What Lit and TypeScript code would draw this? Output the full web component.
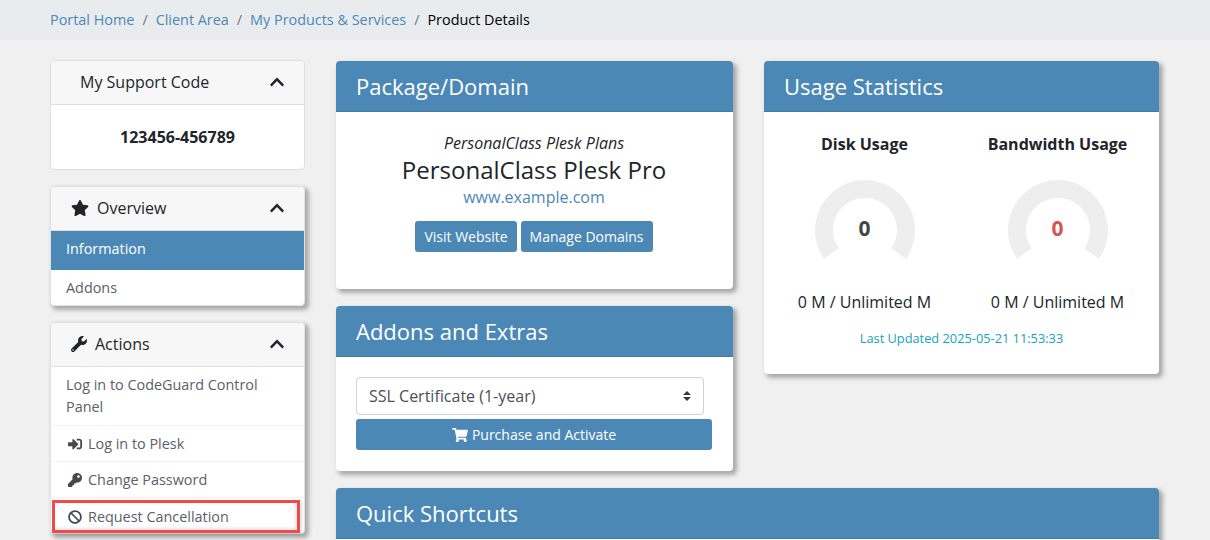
import { LitElement, html, css, svg } from "lit";
import { customElement } from "lit/decorators.js";

const I = {
  star: ["0 0 576 512", "M259.3 17.8L194 150.2 47.9 171.5c-26.2 3.8-36.7 36.1-17.7 54.6l105.7 103-25 145.5c-4.5 26.3 23.2 46 46.4 33.7L288 439.6l130.7 68.7c23.2 12.2 50.9-7.4 46.4-33.7l-25-145.5 105.7-103c19-18.5 8.5-50.8-17.7-54.6L382 150.2 316.7 17.8c-11.7-23.6-45.6-23.9-57.4 0z"],
  wrench: ["0 0 512 512", "M507.73 109.1c-2.24-9.03-13.54-12.09-20.12-5.51l-74.36 74.36-67.88-11.31-11.31-67.88 74.36-74.36c6.62-6.62 3.43-17.9-5.66-20.16-47.38-11.74-99.55.91-136.58 37.93-39.64 39.64-50.55 97.1-34.05 147.2L18.74 402.76c-24.99 24.99-24.99 65.51 0 90.5 24.99 24.99 65.51 24.99 90.5 0l213.21-213.21c50.12 16.71 107.47 5.68 147.37-34.22 37.07-37.07 49.7-89.32 37.91-136.73zM64 472c-13.25 0-24-10.75-24-24 0-13.26 10.75-24 24-24s24 10.74 24 24c0 13.25-10.75 24-24 24z"],
  signin: ["0 0 512 512", "M416 448h-84c-6.6 0-12-5.4-12-12v-40c0-6.6 5.4-12 12-12h84c17.7 0 32-14.3 32-32V160c0-17.7-14.3-32-32-32h-84c-6.6 0-12-5.4-12-12V76c0-6.6 5.4-12 12-12h84c53 0 96 43 96 96v192c0 53-43 96-96 96zm-47-201L201 79c-15-15-41-4.5-41 17v96H24c-13.3 0-24 10.7-24 24v96c0 13.3 10.7 24 24 24h136v96c0 21.5 26 32 41 17l168-168c9.3-9.4 9.3-24.6 0-34z"],
  key: ["0 0 512 512", "M512 176.001C512 273.203 433.202 352 336 352c-11.22 0-22.19-1.062-32.827-3.069l-24.012 27.014A23.999 23.999 0 0 1 261.223 384H224v40c0 13.255-10.745 24-24 24h-40v40c0 13.255-10.745 24-24 24H24c-13.255 0-24-10.745-24-24v-78.059c0-6.365 2.529-12.47 7.029-16.971l161.802-161.802C163.108 213.814 160 195.271 160 176 160 78.798 238.797.001 335.999 0 433.488-.001 512 78.511 512 176.001zM336 128c0 26.51 21.49 48 48 48s48-21.49 48-48-21.49-48-48-48-48 21.49-48 48z"],
  ban: ["0 0 512 512", "M256 8C119.034 8 8 119.033 8 256s111.034 248 248 248 248-111.034 248-248S392.967 8 256 8zm130.108 117.892c65.448 65.448 70 165.481 20.677 235.637L150.47 105.216c70.204-49.356 170.226-44.735 235.638 20.676zM125.892 386.108c-65.448-65.448-70-165.481-20.677-235.637L361.53 406.784c-70.203 49.356-170.226 44.736-235.638-20.676z"],
  cart: ["0 0 576 512", "M528.12 301.319l47.273-208C578.806 78.301 567.391 64 551.99 64H159.208l-9.166-44.81C147.758 8.021 137.93 0 126.529 0H24C10.745 0 0 10.745 0 24v16c0 13.255 10.745 24 24 24h69.883l70.248 343.435C147.325 417.1 136 435.222 136 456c0 30.928 25.072 56 56 56s56-25.072 56-56c0-15.674-6.447-29.835-16.824-40h209.647C430.447 426.165 424 440.326 424 456c0 30.928 25.072 56 56 56s56-25.072 56-56c0-22.172-12.888-41.332-31.579-50.405l5.517-24.276c3.413-15.018-8.002-29.319-23.403-29.319H218.117l-6.545-32h293.145c11.206 0 20.92-7.754 23.403-18.681z"],
  chevron: ["0 0 448 512", "M240.971 130.524l194.343 194.343c9.373 9.373 9.373 24.569 0 33.941l-22.667 22.667c-9.357 9.357-24.522 9.375-33.901.04L224 227.495 69.255 381.516c-9.379 9.335-24.544 9.317-33.901-.04l-22.667-22.667c-9.373-9.373-9.373-24.569 0-33.941L207.03 130.525c9.372-9.373 24.568-9.373 33.941-.001z"],
};

const icon = (k: keyof typeof I, cls = "") =>
  html`<svg class="ic ${cls}" viewBox=${I[k][0]} aria-hidden="true"><path fill="currentColor" d=${I[k][1]}></path></svg>`;

const gauge = (color: string) => html`
  <div class="gauge">
    <svg viewBox="0 0 100 100" width="100" height="100" aria-hidden="true">
      ${svg`<path d="M16.4 73.5 A41 41 0 1 1 83.6 73.5" fill="none" stroke="#eeeeee" stroke-width="18"></path>`}
    </svg>
    <span class="gauge-val" style="color:${color}">0</span>
  </div>`;

@customElement("app-root")
export class AppRoot extends LitElement {
  static styles = css`
    :host {
      display: block;
      width: 1210px;
      height: 540px;
      overflow: hidden;
      background: #f0f0f0;
      font-family: "Open Sans", sans-serif;
      font-size: 14px;
      color: #212529;
    }
    *, *::after { box-sizing: border-box; }
    a { color: #4c88b6; text-decoration: none; }
    .crumbs {
      height: 40px;
      background: #e9ecef;
      padding: 0 0 2px 50px;
      display: flex;
      align-items: center;
      font-size: 14.4px;
      gap: 8px;
    }
    .crumbs .sep { color: #6c757d; }
    .crumbs .cur { color: #000; }
    .layout {
      display: flex;
      padding: 20px 0 0 50px;
      gap: 30px;
      align-items: flex-start;
    }
    .side { width: 255px; flex: none; display: flex; flex-direction: column; gap: 16px; }
    .ic { display: inline-block; width: 1em; height: 1em; flex: none; }
    .sp {
      background: #fff;
      border: 1px solid #dfdfdf;
      border-radius: 4px;
      overflow: hidden;
    }
    .sp.sh { box-shadow: 3px 3px 4px 1px #aaaaaa; border-color: #e2e2e2; overflow: visible; }
    .sp-h {
      height: 44px;
      background: #f7f7f7;
      border-bottom: 1px solid #dfdfdf;
      display: flex;
      align-items: center;
      font-size: 16px;
      padding: 0 20px 2px 20px;
      color: #212529;
      border-radius: 4px 4px 0 0;
    }
    .sp-h .t { flex: 1; display: flex; align-items: center; gap: 8px; }
    .sp-h .t.indent { padding-left: 9px; }
    .sp-h .star { width: 18px; height: 16px; }
    .sp-h .chev { font-size: 16px; width: 14px; height: 16px; color: #212529; }
    .code {
      height: 64px;
      display: flex;
      align-items: center;
      justify-content: center;
      font-weight: 700;
      font-size: 16px;
    }
    .item {
      display: block;
      padding: 8px 15px;
      color: #5a6168;
      font-size: 14.4px;
      line-height: 22px;
      border-bottom: 1px solid #f2f2f2;
    }
    .item:last-child { border-bottom: 0; }
    .item.active { background: #4c88b6; color: #fff; height: 39px; padding-top: 7px; border: 0; }
    .item.plain { height: 35px; border: 0; padding-top: 7px; }
    .item.row { display: flex; align-items: center; gap: 6px; height: 36px; padding: 0 15px 0 17px; }
    .item .ic { width: 14px; height: 14px; color: #444a50; }
    .item.tall { padding: 7px 15px 8px; height: 59px; }
    .item.row.hl { position: relative; height: 35px; padding-top: 2px; }
    .hl::after {
      content: "";
      position: absolute;
      left: 1px;
      right: 4px;
      top: 2px;
      height: 33px;
      border: 3px solid #f24a4a;
      box-shadow: 2px 2px 3px rgba(0, 0, 0, 0.12), inset -2px -2px 3px rgba(0, 0, 0, 0.1);
      pointer-events: none;
    }
    .main { width: 825px; flex: none; padding: 1px 0 0 1px; display: flex; flex-direction: column; gap: 17px; }
    .cols { display: flex; gap: 31px; align-items: flex-start; }
    .col { width: 397px; display: flex; flex-direction: column; gap: 17px; flex: none; }
    .col.r { width: 395px; }
    .quick { width: 823px; }
    .card {
      background: #fff;
      border-radius: 4px;
      box-shadow: 3px 3px 4px 1px #aaaaaa;
    }
    .card-h {
      height: 51px;
      background: #4c88b6;
      color: #fff;
      font-size: 22px;
      display: flex;
      align-items: center;
      padding: 0 20px;
      border-radius: 4px 4px 0 0;
      border-bottom: 1px solid #44799f;
    }
    .pkg { height: 177px; padding: 21px 1px 0 0; text-align: center; }
    .pkg .group { font-style: italic; font-size: 16px; line-height: 21px; height: 21px; }
    .pkg .name { font-size: 24px; line-height: 32px; height: 32px; color: #212529; }
    .pkg .dom { font-size: 16px; line-height: 22px; height: 22px; }
    .pkg .btns { display: flex; justify-content: center; gap: 4px; margin-top: 13px; }
    .btn {
      background: #4c88b6;
      color: #fff;
      border: 0;
      border-radius: 3px;
      font: inherit;
      font-size: 14px;
      height: 31px;
      padding: 0 9px;
      display: flex;
      align-items: center;
      justify-content: center;
      gap: 4px;
    }
    .addons { height: 114px; padding: 20px 21px 0 20px; }
    .sel-wrap { position: relative; width: 348px; height: 38px; }
    select {
      appearance: none;
      -webkit-appearance: none;
      width: 100%;
      height: 100%;
      border: 1px solid #ced4da;
      border-radius: 4px;
      background: #fff;
      font-family: inherit;
      font-size: 16px;
      color: #495057;
      padding: 0 12px;
    }
    .arrows { position: absolute; right: 13px; top: 14px; pointer-events: none; }
    .wide { width: 356px; margin-top: 4px; }
    .wide .ic { width: 16px; height: 14px; }
    .usage { height: 262px; padding-top: 20px; }
    .gauges { display: flex; padding: 0 0 0 4px; }
    .g { width: 193px; text-align: center; display: flex; flex-direction: column; align-items: center; }
    .g .lbl { font-weight: 700; font-size: 16px; line-height: 24px; height: 24px; }
    .gauge { position: relative; width: 100px; height: 100px; margin-top: 24px; }
    .gauge-val {
      position: absolute;
      left: 0;
      right: 0;
      top: 34px;
      text-align: center;
      font-weight: 700;
      font-size: 21px;
      line-height: 28px;
    }
    .g .use { font-size: 16px; line-height: 24px; margin-top: 10px; }
    .updated { text-align: center; color: #17a2b8; font-size: 12.8px; line-height: 18px; margin-top: 15px; }
    .quick-body { height: 120px; }
  `;

  render() {
    return html`
      <nav class="crumbs">
        <a href="#">Portal Home</a><span class="sep">/</span>
        <a href="#">Client Area</a><span class="sep">/</span>
        <a href="#">My Products &amp; Services</a><span class="sep">/</span>
        <span class="cur">Product Details</span>
      </nav>
      <div class="layout">
        <aside class="side">
          <section class="sp">
            <div class="sp-h"><span class="t indent">My Support Code</span>${icon("chevron", "chev")}</div>
            <div class="code">123456-456789</div>
          </section>
          <section class="sp sh">
            <div class="sp-h"><span class="t">${icon("star", "star")}Overview</span>${icon("chevron", "chev")}</div>
            <a class="item active" href="#">Information</a>
            <a class="item plain" href="#">Addons</a>
          </section>
          <section class="sp sh">
            <div class="sp-h"><span class="t">${icon("wrench")}Actions</span>${icon("chevron", "chev")}</div>
            <a class="item tall" href="#">Log in to CodeGuard Control Panel</a>
            <a class="item row" href="#">${icon("signin")}Log in to Plesk</a>
            <a class="item row" href="#">${icon("key")}Change Password</a>
            <a class="item row hl" href="#">${icon("ban")}Request Cancellation</a>
          </section>
        </aside>
        <main class="main">
          <div class="cols">
            <div class="col">
              <section class="card">
                <div class="card-h">Package/Domain</div>
                <div class="pkg">
                  <div class="group">PersonalClass Plesk Plans</div>
                  <div class="name">PersonalClass Plesk Pro</div>
                  <div class="dom"><a href="#">www.example.com</a></div>
                  <div class="btns">
                    <button class="btn">Visit Website</button>
                    <button class="btn">Manage Domains</button>
                  </div>
                </div>
              </section>
              <section class="card">
                <div class="card-h">Addons and Extras</div>
                <div class="addons">
                  <div class="sel-wrap">
                    <select><option>SSL Certificate (1-year)</option></select>
                    <svg class="arrows" width="8" height="10" viewBox="0 0 8 10" aria-hidden="true">
                      <path d="M4 0 L8 4 H0 Z M0 6 H8 L4 10 Z" fill="#343a40"></path>
                    </svg>
                  </div>
                  <button class="btn wide">${icon("cart")}Purchase and Activate</button>
                </div>
              </section>
            </div>
            <div class="col r">
              <section class="card">
                <div class="card-h">Usage Statistics</div>
                <div class="usage">
                  <div class="gauges">
                    <div class="g">
                      <div class="lbl">Disk Usage</div>
                      ${gauge("#444444")}
                      <div class="use">0 M / Unlimited M</div>
                    </div>
                    <div class="g">
                      <div class="lbl">Bandwidth Usage</div>
                      ${gauge("#d9534f")}
                      <div class="use">0 M / Unlimited M</div>
                    </div>
                  </div>
                  <div class="updated">Last Updated 2025-05-21 11:53:33</div>
                </div>
              </section>
            </div>
          </div>
          <section class="card quick">
            <div class="card-h">Quick Shortcuts</div>
            <div class="quick-body"></div>
          </section>
        </main>
      </div>
    `;
  }
}
